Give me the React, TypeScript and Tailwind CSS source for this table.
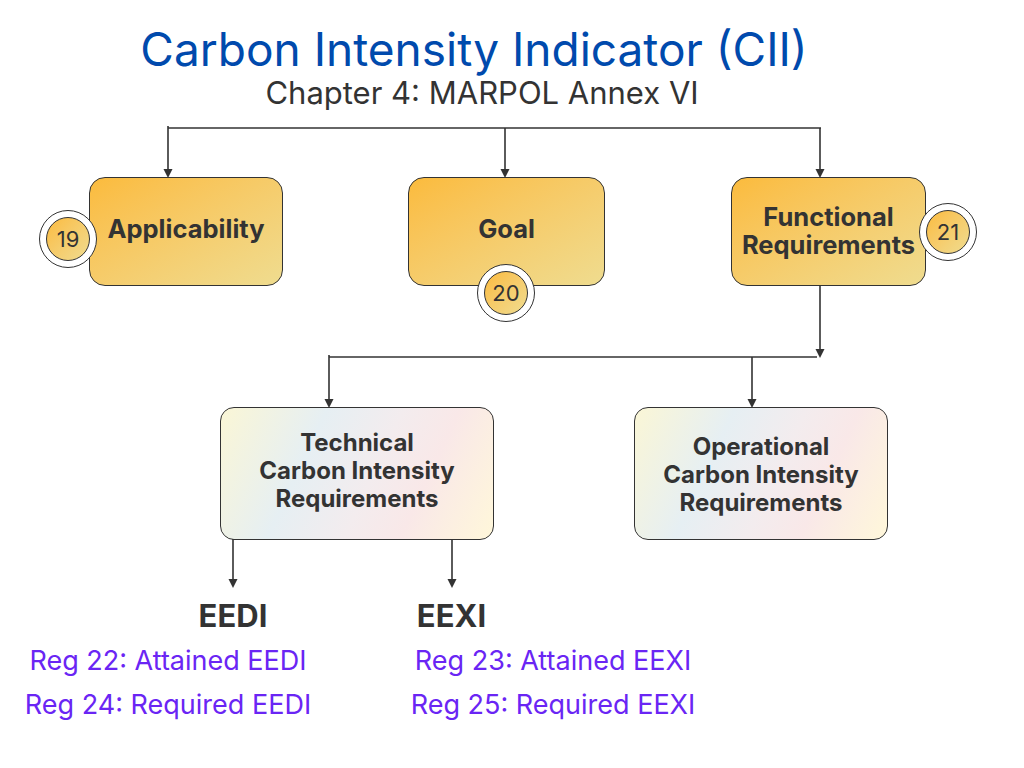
import React from "react";

const ink = "#333333";

// connector segments of the diagram, in page pixels
const lines: [number, number, number, number][] = [
  [168, 126, 168, 170],
  [168, 128, 821, 128],
  [505, 128, 505, 170],
  [820, 128, 820, 170],
  [820, 286, 820, 350],
  [329, 357, 817, 357],
  [329, 355, 329, 400],
  [752, 357, 752, 400],
  [233, 539, 233, 580],
  [452, 539, 452, 580],
];

const arrowTips: [number, number][] = [
  [168, 178],
  [505, 178],
  [820, 178],
  [820, 358],
  [329, 408],
  [752, 408],
  [233, 588],
  [452, 588],
];

function Connectors() {
  return (
    <svg className="absolute inset-0 pointer-events-none" width={1024} height={768}>
      {lines.map(([x1, y1, x2, y2], i) => (
        <line key={i} x1={x1} y1={y1} x2={x2} y2={y2} stroke={ink} strokeWidth={1.6} />
      ))}
      {arrowTips.map(([x, y], i) => (
        <polygon key={i} points={`${x},${y} ${x - 4.5},${y - 9} ${x + 4.5},${y - 9}`} fill={ink} />
      ))}
    </svg>
  );
}

function Badge({ n, className }: { n: number; className: string }) {
  return (
    <div
      className={`absolute w-[58px] h-[58px] rounded-full bg-white border-[1.5px] border-[#333] flex items-center justify-center ${className}`}
    >
      <div className="w-[44px] h-[44px] rounded-full border border-[#333] bg-linear-to-br from-[#fbbb3c] to-[#efdc8f] flex items-center justify-center text-[22px] text-[#333]">
        {n}
      </div>
    </div>
  );
}

function RegGroup({
  title,
  regs,
  className,
  titleClass,
}: {
  title: string;
  regs: string[];
  className: string;
  titleClass: string;
}) {
  return (
    <div className={`absolute flex flex-col ${className}`}>
      <div className={`font-bold text-[31px] leading-[36px] text-[#333] text-center ${titleClass}`}>{title}</div>
      <div className="mt-[9px] flex flex-col gap-[8px] text-[27px] leading-[36px] text-[#6a25f4] text-center">
        {regs.map((r) => (
          <div key={r}>{r}</div>
        ))}
      </div>
    </div>
  );
}

export default function App() {
  const yellow =
    "absolute rounded-[16px] border border-[#333] bg-linear-to-br from-[#fbbb3c] to-[#efdc8f] flex items-center justify-center text-center font-bold text-[25.5px] leading-[28px] text-[#333]";
  const pastel =
    "absolute rounded-[14px] border border-[#333] bg-[linear-gradient(115deg,#faf6d6_0%,#e6eff3_32%,#f3ecee_55%,#f9e8e8_72%,#fff7da_100%)] flex items-center justify-center text-center font-bold text-[24px] leading-[28px] text-[#333]";

  return (
    <div
      className="relative w-[1024px] h-[768px] bg-white overflow-hidden"
      style={{ fontFamily: "Inter, 'Liberation Sans', sans-serif" }}
    >
      <div className="w-[948px] pt-[23px] flex flex-col items-center">
        <h1 className="text-[46px] leading-[52px] text-[#004aad] font-normal">Carbon Intensity Indicator (CII)</h1>
        <p className="pl-[16px] text-[31px] leading-[36px] text-[#333]">Chapter 4: MARPOL Annex VI</p>
      </div>

      <Connectors />

      <div className={`${yellow} left-[89px] top-[177px] w-[194px] h-[109px]`}>
        <span className="-mt-[6px]">Applicability</span>
      </div>
      <div className={`${yellow} left-[408px] top-[177px] w-[197px] h-[109px]`}>
        <span className="-mt-[6px]">Goal</span>
      </div>
      <div className={`${yellow} left-[731px] top-[177px] w-[195px] h-[109px]`}>
        <span className="-mt-[2px]">
          Functional
          <br />
          Requirements
        </span>
      </div>

      <Badge n={19} className="left-[39px] top-[210px]" />
      <Badge n={20} className="left-[477px] top-[264px]" />
      <Badge n={21} className="left-[919px] top-[203px]" />

      <div className={`${pastel} left-[220px] top-[407px] w-[274px] h-[133px]`}>
        <span className="-mt-[5px]">
          Technical
          <br />
          Carbon Intensity
          <br />
          Requirements
        </span>
      </div>
      <div className={`${pastel} left-[634px] top-[407px] w-[254px] h-[133px]`}>
        <span className="mt-[3px]">
          Operational
          <br />
          Carbon Intensity
          <br />
          Requirements
        </span>
      </div>

      <RegGroup
        title="EEDI"
        titleClass="pl-[130px]"
        regs={["Reg 22: Attained EEDI", "Reg 24: Required EEDI"]}
        className="left-[8px] top-[598px] w-[320px]"
      />
      <RegGroup
        title="EEXI"
        titleClass="pr-[203px]"
        regs={["Reg 23: Attained EEXI", "Reg 25: Required EEXI"]}
        className="left-[393px] top-[598px] w-[320px]"
      />
    </div>
  );
}
